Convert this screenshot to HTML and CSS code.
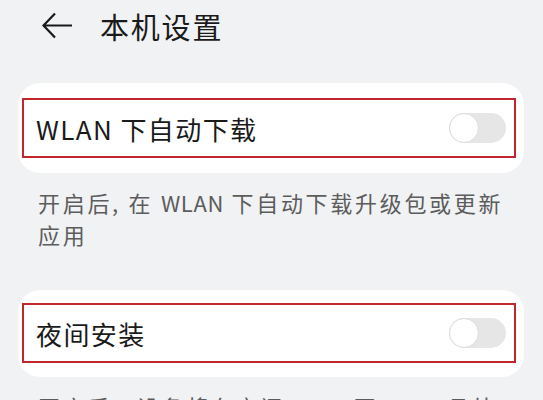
FILE: index.html
```html
<!DOCTYPE html>
<html lang="zh-CN">
<head>
    <meta charset="UTF-8">
    <meta name="viewport" content="width=device-width, initial-scale=1.0">
    <title>本机设置</title>
    <link rel="stylesheet" href="styles.css">
</head>
<body>
    <div class="header">
        <svg class="back" width="32" height="30" viewBox="0 0 32 30">
            <path d="M31 14.5H2.5M14 2.5L2.5 14.5L14 26.5" fill="none" stroke="#1a1a1a" stroke-width="2.2"/>
        </svg>
        <h1>本机设置</h1>
    </div>

    <div class="card">
        <div class="row">
            <span class="label">WLAN 下自动下载</span>
            <div class="switch"><div class="knob"></div></div>
        </div>
    </div>
    <p class="desc">开启后, 在 <span class="latin">WLAN</span> 下自动下载升级包或更新应用</p>

    <div class="card second">
        <div class="row">
            <span class="label">夜间安装</span>
            <div class="switch"><div class="knob"></div></div>
        </div>
    </div>
    <p class="desc">开启后，设备将在夜间 2:00 至 4:00 且处于充电状态时自动安装</p>
</body>
</html>
```

FILE: styles.css
```css
body {
    margin: 0;
    background-color: #f1f2f4;
    font-family: "Noto Sans CJK SC", "Noto Sans", sans-serif;
    color: #1a1a1a;
    overflow: hidden;
}
.header {
    display: flex;
    align-items: center;
    height: 54px;
    padding-left: 41px;
    gap: 27px;
}
.back {
    display: block;
    margin-top: -2px;
}
h1 {
    margin: 0;
    font-size: 29px;
    font-weight: normal;
    letter-spacing: 1.8px;
    line-height: 1;
    margin-top: -1px;
}
.card {
    margin: 29px 19px 0 18px;
    padding: 15px 8px 15px 4px;
    background-color: #ffffff;
    border-radius: 22px;
}
.card.second {
    margin-top: 40px;
    padding-top: 13px;
    padding-bottom: 14px;
}
.row {
    display: flex;
    align-items: center;
    justify-content: space-between;
    height: 56px;
    padding: 0 8px 0 12px;
    border: 2px solid #c3262a;
}
.label {
    font-size: 26px;
    letter-spacing: 1.4px;
}
.switch {
    width: 57px;
    height: 30px;
    border-radius: 15px;
    background-color: #e6e6e6;
}
.knob {
    width: 28px;
    height: 28px;
    border-radius: 50%;
    background-color: #ffffff;
    border: 1px solid #dcdcdc;
}
.desc {
    margin: 13px 30px 0 38px;
    font-size: 22px;
    line-height: 32px;
    letter-spacing: 2.7px;
    color: #5c5c5c;
}
.latin {
    letter-spacing: 0.6px;
}
```
